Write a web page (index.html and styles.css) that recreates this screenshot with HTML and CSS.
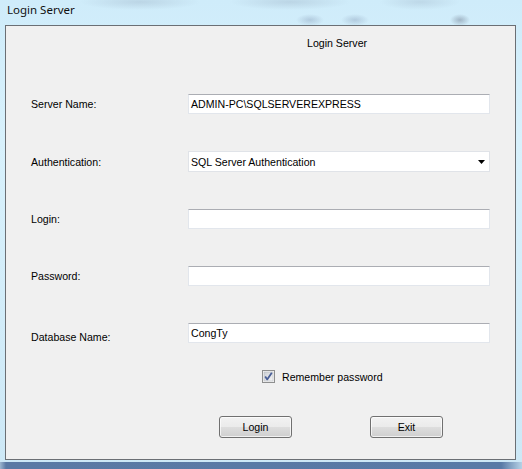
FILE: index.html
```html
<!DOCTYPE html>
<html>
<head>
<meta charset="utf-8">
<link rel="stylesheet" href="styles.css">
</head>
<body>
<div class="window">
  <div class="titlebar"><span class="title">Login Server</span></div>
  <div class="client">
    <div class="heading">Login Server</div>
    <div class="fields">
      <label class="lbl">Server Name:</label>
      <div class="textbox">ADMIN-PC\SQLSERVEREXPRESS</div>
      <label class="lbl">Authentication:</label>
      <div class="combo"><span>SQL Server Authentication</span>
        <svg class="arrow" width="7" height="4" viewBox="0 0 7 4"><path d="M0 0H7L3.5 4Z" fill="#000"/></svg>
      </div>
      <label class="lbl">Login:</label>
      <div class="textbox"></div>
      <label class="lbl">Password:</label>
      <div class="textbox"></div>
      <label class="lbl lbl-low">Database Name:</label>
      <div class="textbox">CongTy</div>
    </div>
    <div class="check-row">
      <svg class="checkbox" width="13" height="13" viewBox="0 0 13 13">
        <defs>
          <linearGradient id="cg" x1="0" y1="0" x2="1" y2="1">
            <stop offset="0" stop-color="#cbcfd5"/>
            <stop offset="1" stop-color="#f6f6f6"/>
          </linearGradient>
        </defs>
        <rect x="0.5" y="0.5" width="12" height="12" fill="#f4f4f4" stroke="#8e8f8f"/>
        <rect x="2" y="2" width="9" height="9" fill="url(#cg)" stroke="#aeb3b9" stroke-width="0.5"/>
        <path d="M3.2 6.6L5.2 9.4L9.8 2.8" fill="none" stroke="#4a5f97" stroke-width="1.8" stroke-linejoin="round"/>
      </svg>
      <span class="check-label">Remember password</span>
    </div>
    <div class="buttons">
      <button class="btn">Login</button>
      <button class="btn">Exit</button>
    </div>
  </div>
  <div class="bottom"></div>
</div>
</body>
</html>
```
FILE: styles.css
```css
html, body {
  margin: 0;
  padding: 0;
}
body {
  width: 522px;
  height: 469px;
  overflow: hidden;
  background:
    radial-gradient(ellipse 60px 8px at 140px 2px, rgba(150,170,190,0.35), transparent),
    radial-gradient(ellipse 60px 8px at 290px 2px, rgba(150,170,190,0.35), transparent),
    radial-gradient(ellipse 40px 8px at 420px 2px, rgba(150,170,190,0.3), transparent),
    radial-gradient(ellipse 14px 6px at 310px 20px, rgba(120,140,170,0.35), transparent),
    radial-gradient(ellipse 14px 6px at 355px 20px, rgba(120,140,170,0.35), transparent),
    radial-gradient(ellipse 10px 6px at 460px 20px, rgba(90,100,120,0.4), transparent),
    linear-gradient(180deg, #cfecfa 0%, #d8f1fc 30%, #cde8f6 100%);
  font-family: "Liberation Sans", Arial, sans-serif;
}
.window {
  display: flex;
  flex-direction: column;
  height: 469px;
}
.titlebar {
  height: 25px;
  padding-left: 7px;
  display: flex;
  align-items: center;
}
.title {
  font-family: "Noto Sans", "Liberation Sans", sans-serif;
  font-size: 11.5px;
  color: #111;
  margin-top: -6px;
}
.client {
  margin-left: 5px;
  width: 511px;
  height: 435px;
  border: 1px solid #6b6f74;
  background: #f0f0f0;
  padding-left: 25px;
  box-sizing: border-box;
  font-size: 10.6px;
  color: #000;
}
.heading {
  margin-top: 9px;
  padding-left: 276px;
  line-height: 16px;
}
.fields {
  margin-top: 43px;
  display: grid;
  grid-template-columns: 157px 302px;
  grid-template-rows: 20px 21px 20px 20px 20px;
  row-gap: 37px;
  align-items: center;
}
.lbl {
  line-height: 14px;
}
.lbl-low {
  margin-top: 7px;
}
.textbox, .combo {
  height: 100%;
  box-sizing: border-box;
  background: #fff;
  border: 1px solid #e2e6ec;
  border-top-color: #abadb3;
  padding-left: 2px;
  line-height: 18px;
  white-space: nowrap;
}
.combo {
  border: 1px solid #e0e3e8;
  display: flex;
  align-items: center;
  justify-content: space-between;
  padding-right: 4px;
}
.combo .arrow {
  display: block;
}
.check-row {
  margin-top: 26px;
  padding-left: 231px;
  display: flex;
  align-items: center;
  gap: 7px;
  height: 14px;
}
.checkbox {
  display: block;
}
.check-label {
  line-height: 14px;
  padding-top: 1px;
}
.buttons {
  margin-top: 33px;
  padding-left: 188px;
  display: flex;
  gap: 78px;
}
.btn {
  width: 73px;
  height: 22px;
  margin: 0;
  padding: 0;
  font-family: "Liberation Sans", Arial, sans-serif;
  font-size: 10.6px;
  color: #000;
  border: 1px solid #707070;
  border-radius: 3px;
  background: linear-gradient(180deg, #f2f2f2 0%, #ebebeb 48%, #dddddd 52%, #cfcfcf 100%);
  box-shadow: inset 0 0 0 1px rgba(255,255,255,0.7);
}
.bottom {
  margin-top: 2px;
  flex: 1;
  background: linear-gradient(90deg, #9db6cf 0px, #5a79a4 6px, #587aa6 96%, #b6d2e6 100%);
}
```
